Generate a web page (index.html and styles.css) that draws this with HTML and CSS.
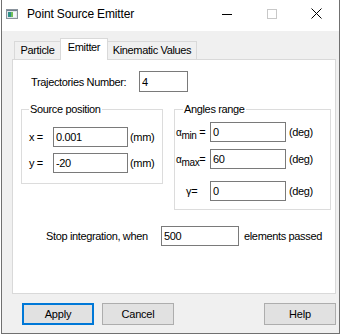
FILE: index.html
```html
<html>
    <head>
        <link rel="stylesheet" href="styles.css">
        <title>Point Source Emitter</title>
    </head>
    <body>
        <div class="window">
            <div class="titlebar">
                <svg class="appIcon" width="12" height="10" viewBox="0 0 12 10">
                    <rect x="0.5" y="0.5" width="11" height="9" fill="#dfe6ec" stroke="#8a939c"/>
                    <rect x="1" y="1" width="10" height="1" fill="#6f7f8f"/>
                    <rect x="2" y="3" width="3" height="5" fill="#2f8f8a"/>
                    <rect x="5" y="3" width="2" height="5" fill="#6fbf5a"/>
                    <rect x="7" y="3" width="3" height="5" fill="#f4f7fa"/>
                </svg>
                <span class="title">Point Source Emitter</span>
                <div class="captionButtons">
                    <span class="capButton">
                        <svg width="10" height="10" viewBox="0 0 10 10"><path d="M0 5.5H10" stroke="#000" stroke-width="1"/></svg>
                    </span>
                    <span class="capButton">
                        <svg width="10" height="10" viewBox="0 0 10 10"><rect x="0.5" y="0.5" width="9" height="9" fill="none" stroke="#c8c8c8"/></svg>
                    </span>
                    <span class="capButton">
                        <svg width="11" height="11" viewBox="0 0 11 11"><path d="M0.5 0.5L10.5 10.5M10.5 0.5L0.5 10.5" stroke="#000" stroke-width="1"/></svg>
                    </span>
                </div>
            </div>
            <div class="client">
                <div class="tabs">
                    <div class="tab particleTab">Particle</div>
                    <div class="tab selected emitterTab">Emitter</div>
                    <div class="tab kinematicTab">Kinematic Values</div>
                </div>
                <div class="panel">
                    <div class="trajRow">
                        <span class="trajLabel">Trajectories Number:</span>
                        <input class="field trajField" type="text" value="4">
                    </div>
                    <div class="groups">
                        <fieldset class="group sourceGroup">
                            <legend>Source position</legend>
                            <div class="row">
                                <span class="coordLabel">x =</span>
                                <input class="field coordField" type="text" value="0.001">
                                <span class="unit">(mm)</span>
                            </div>
                            <div class="row">
                                <span class="coordLabel">y =</span>
                                <input class="field coordField" type="text" value="-20">
                                <span class="unit">(mm)</span>
                            </div>
                        </fieldset>
                        <fieldset class="group anglesGroup">
                            <legend>Angles range</legend>
                            <div class="row">
                                <span class="angleLabel"><span class="alpha">&alpha;</span><sub>min</sub> =</span>
                                <input class="field angleField" type="text" value="0">
                                <span class="unit degUnit">(deg)</span>
                            </div>
                            <div class="row maxRow">
                                <span class="angleLabel"><span class="alpha">&alpha;</span><sub>max</sub>=</span>
                                <input class="field angleField" type="text" value="60">
                                <span class="unit degUnit">(deg)</span>
                            </div>
                            <div class="row gammaRow">
                                <span class="angleLabel gammaLabel">&gamma;=</span>
                                <input class="field angleField" type="text" value="0">
                                <span class="unit degUnit">(deg)</span>
                            </div>
                        </fieldset>
                    </div>
                    <div class="stopRow">
                        <span class="stopLabel">Stop integration, when</span>
                        <input class="field stopField" type="text" value="500">
                        <span class="stopUnit">elements passed</span>
                    </div>
                </div>
                <div class="buttons">
                    <button type="button" class="btn default">Apply</button>
                    <button type="button" class="btn">Cancel</button>
                    <button type="button" class="btn helpBtn">Help</button>
                </div>
            </div>
        </div>
    </body>
</html>
```

FILE: styles.css
```css
body            {margin: 0;
                 background-color: white;
                 font-family: "Liberation Sans", Arial, sans-serif;
                 font-size: 11px;
                 letter-spacing: -0.35px;
                 color: black;}
.window         {box-sizing: border-box;
                 width: 339px;
                 height: 334px;
                 margin-left: 1px;
                 border: 1px solid #707070;
                 border-top: none;
                 display: flex;
                 flex-direction: column;}
.titlebar       {height: 31px;
                 flex: none;
                 display: flex;
                 align-items: center;
                 background-color: white;}
.appIcon        {margin: 0 9px 3px 4px;
                 flex: none;}
.title          {font-size: 12px;
                 letter-spacing: -0.15px;
                 margin-bottom: 4px;}
.captionButtons {margin-left: auto;
                 display: flex;
                 height: 31px;}
.capButton      {width: 45px;
                 display: flex;
                 align-items: center;
                 justify-content: center;
                 padding-bottom: 4px;
                 box-sizing: border-box;}
.client         {flex: 1;
                 background-color: #f0f0f0;
                 padding: 7px 3px 0 10px;}
.tabs           {display: flex;
                 align-items: flex-end;
                 height: 21px;
                 padding-left: 2px;}
.tab            {box-sizing: border-box;
                 height: 18px;
                 border: 1px solid #d9d9d9;
                 border-bottom: none;
                 background-color: #f0f0f0;
                 text-align: center;
                 line-height: 17px;}
.particleTab    {width: 46px;
                 border-right: none;}
.emitterTab     {width: 48px;}
.kinematicTab   {width: 89px;
                 border-left: none;}
.selected       {height: 22px;
                 margin-bottom: -1px;
                 background-color: white;
                 line-height: 17px;
                 position: relative;
                 z-index: 1;}
.panel          {box-sizing: border-box;
                 height: 235px;
                 border: 1px solid #d9d9d9;
                 background-color: white;}
.field          {box-sizing: border-box;
                 height: 20px;
                 border: 1px solid #7a7a7a;
                 padding: 0 2px;
                 margin: 0;
                 font-family: "Liberation Sans", Arial, sans-serif;
                 font-size: 11px;
                 letter-spacing: -0.35px;
                 color: black;
                 background-color: white;
                 outline: none;}
.trajRow        {display: flex;
                 align-items: center;
                 margin: 11px 0 0 18px;}
.trajLabel      {width: 108px;}
.trajField      {width: 49px;
                 height: 21px;}
.groups         {display: flex;
                 align-items: flex-start;
                 margin: 11px 0 0 8px;}
.group          {margin: 0;
                 border: 1px solid #dcdcdc;
                 box-sizing: border-box;}
.group legend   {padding: 0 1px;
                 line-height: 13px;}
.row            {display: flex;
                 align-items: center;}
.sourceGroup    {width: 142px;
                 padding: 11px 0 10px 7px;}
.sourceGroup legend {margin-left: 0;}
.sourceGroup .row + .row {margin-top: 6px;}
.coordLabel     {width: 24px;}
.coordField     {width: 75px;}
.unit           {margin-left: 2px;}
.anglesGroup    {width: 157px;
                 margin-left: 11px;
                 padding: 6px 0 8px 1px;}
.anglesGroup legend {margin-left: 7px;}
.anglesGroup .maxRow {margin-top: 7px;}
.anglesGroup .gammaRow {margin-top: 12px;}
.angleLabel     {width: 34px;
                 white-space: nowrap;}
.alpha          {font-size: 10px;}
.angleLabel sub {font-size: 10px;
                 vertical-align: -3px;
                 line-height: 0;}
.gammaLabel     {box-sizing: border-box;
                 padding-left: 10px;}
.angleField     {width: 76px;}
.degUnit        {margin-left: 3px;}
.stopRow        {display: flex;
                 align-items: center;
                 margin: 16px 0 0 33px;}
.stopLabel      {width: 115px;}
.stopField      {width: 78px;}
.stopUnit       {margin-left: 5px;}
.buttons        {display: flex;
                 margin: 9px 0 0 10px;}
.btn            {box-sizing: border-box;
                 width: 72px;
                 height: 22px;
                 margin: 0 8px 0 0;
                 padding: 0;
                 border: 1px solid #adadad;
                 background-color: #e1e1e1;
                 font-family: "Liberation Sans", Arial, sans-serif;
                 font-size: 11px;
                 letter-spacing: -0.2px;
                 color: black;}
.default        {border: 2px solid #0078d7;}
.helpBtn        {margin: 0 0 0 auto;}
```
